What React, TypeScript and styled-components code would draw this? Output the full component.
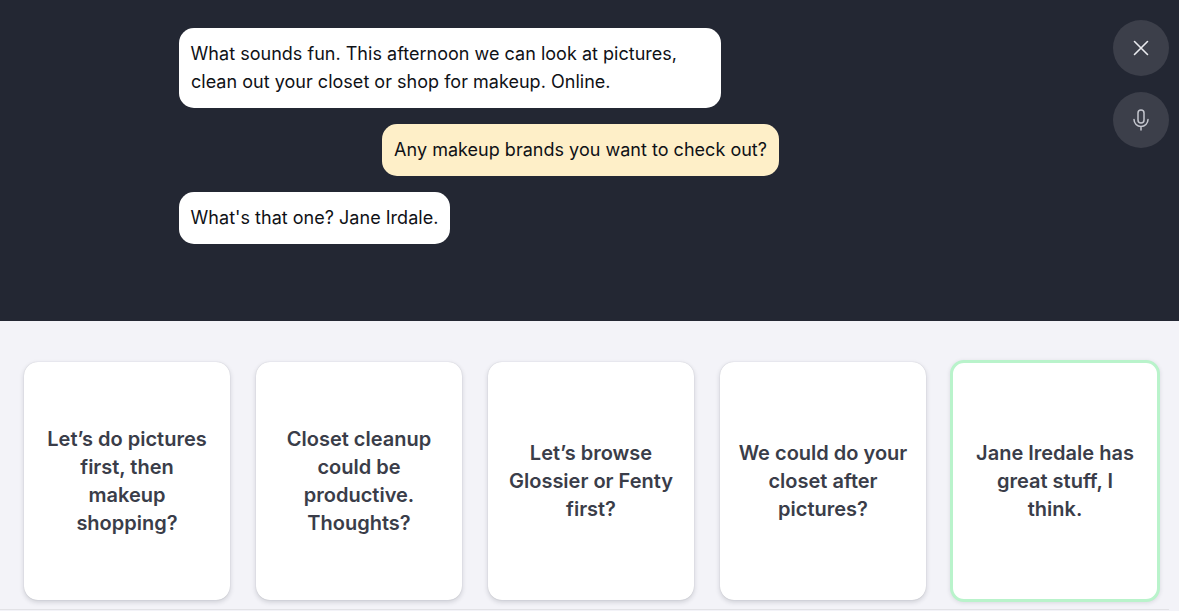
import React from "react";
import styled, { createGlobalStyle } from "styled-components";

const Global = createGlobalStyle`
  html, body { margin: 0; padding: 0; background: #f3f3f8; overflow: hidden; }
  * { box-sizing: border-box; }
`;

const Page = styled.div`
  width: 1179px;
  height: 611px;
  display: flex;
  flex-direction: column;
  font-family: Inter, "Liberation Sans", sans-serif;
  background: #f3f3f8;
`;

const Conversation = styled.section`
  position: relative;
  height: 321px;
  flex: none;
  background: #232733;
  padding: 28px 0 0 179px;
`;

const Thread = styled.div`
  width: 600px;
  display: flex;
  flex-direction: column;
  gap: 16px;
`;

const Bubble = styled.div<{ $mine?: boolean }>`
  align-self: ${(p) => (p.$mine ? "flex-end" : "flex-start")};
  max-width: 542px;
  padding: 12px;
  border-radius: 15px;
  background: ${(p) => (p.$mine ? "#feefc8" : "#ffffff")};
  color: #0f1116;
  font-size: 18px;
  line-height: 28px;
  font-weight: 400;
  letter-spacing: 0.02px;
  text-indent: -0.4px;
`;

const Controls = styled.div`
  position: absolute;
  top: 20px;
  right: 10px;
  display: flex;
  flex-direction: column;
  gap: 16px;
`;

const RoundButton = styled.button`
  width: 56px;
  height: 56px;
  padding: 0;
  border: 0;
  border-radius: 50%;
  background: #3c3f4a;
  color: #e9eaee;
  display: flex;
  align-items: center;
  justify-content: center;
`;

const Choices = styled.section`
  flex: none;
  width: 1169px;
  height: 289px;
  padding: 41px 0 0 24px;
  border-bottom: 1px solid #e2e2e6;
  display: flex;
  gap: 26px;
  align-items: flex-start;
`;

const Card = styled.button<{ $active?: boolean }>`
  flex: none;
  width: ${(p) => (p.$active ? "210px" : "206px")};
  height: ${(p) => (p.$active ? "242px" : "238px")};
  margin: ${(p) => (p.$active ? "-2px 0 0 -2px" : "0")};
  padding: 0 16px;
  border: ${(p) => (p.$active ? "3px solid #b9f3cb" : "0")};
  border-radius: 14px;
  background: #ffffff;
  box-shadow: ${(p) =>
    p.$active
      ? "0 1px 4px rgba(30, 34, 50, 0.12)"
      : "0 0 1px rgba(30, 34, 50, 0.22), 0 2px 5px rgba(30, 34, 50, 0.18)"};
  color: #3a3d49;
  font-family: inherit;
  font-size: 20px;
  line-height: 28px;
  font-weight: 600;
  text-align: center;
  display: flex;
  align-items: center;
  justify-content: center;
`;

const cards = [
  "Let’s do pictures first, then makeup shopping?",
  "Closet cleanup could be productive. Thoughts?",
  "Let’s browse Glossier or Fenty first?",
  "We could do your closet after pictures?",
  "Jane Iredale has great stuff, I think.",
];

export default function App() {
  return (
    <Page>
      <Global />
      <Conversation>
        <Thread>
          <Bubble>What sounds fun. This afternoon we can look at pictures, clean out your closet or shop for makeup. Online.</Bubble>
          <Bubble $mine>Any makeup brands you want to check out?</Bubble>
          <Bubble>What's that one? Jane Irdale.</Bubble>
        </Thread>
        <Controls>
          <RoundButton aria-label="Close">
            <svg width="24" height="24" viewBox="0 0 24 24" fill="none" stroke="currentColor" strokeWidth="1.6" strokeLinecap="round">
              <path d="M5.5 5.5l13 13M18.500 5.500l-13 13" />
            </svg>
          </RoundButton>
          <RoundButton aria-label="Microphone">
            <svg width="24" height="24" viewBox="0 0 24 24" fill="none" stroke="#c4c6ce" strokeWidth="1.5" strokeLinecap="round">
              <rect x="9" y="2" width="6" height="13" rx="3" />
              <path d="M5 11.500a7 7 0 0 0 14 0M12 18.500V22" />
            </svg>
          </RoundButton>
        </Controls>
      </Conversation>
      <Choices>
        {cards.map((text, i) => (
          <Card key={text} $active={i === 4}>{text}</Card>
        ))}
      </Choices>
    </Page>
  );
}
